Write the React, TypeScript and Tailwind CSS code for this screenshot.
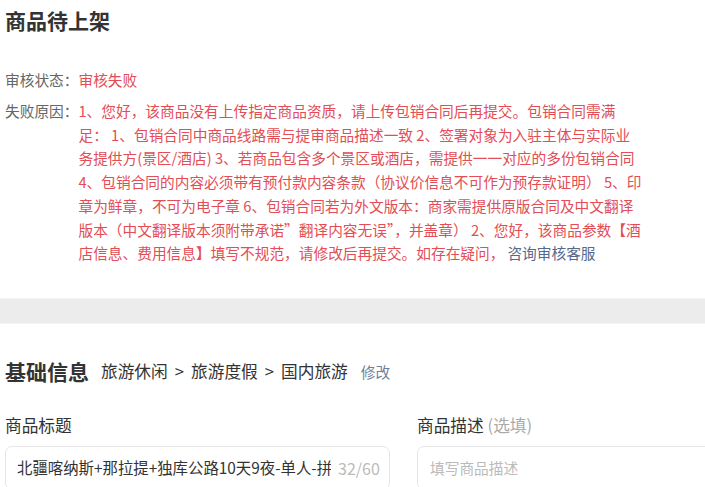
import React from "react";

const lines: string[] = [
  "1、您好，该商品没有上传指定商品资质，请上传包销合同后再提交。包销合同需满",
  "足： 1、包销合同中商品线路需与提审商品描述一致 2、签署对象为入驻主体与实际业",
  "务提供方(景区/酒店) 3、若商品包含多个景区或酒店，需提供一一对应的多份包销合同",
  "4、包销合同的内容必须带有预付款内容条款（协议价信息不可作为预存款证明） 5、印",
  "章为鲜章，不可为电子章 6、包销合同若为外文版本：商家需提供原版合同及中文翻译",
  "版本（中文翻译版本须附带承诺”翻译内容无误”，并盖章） 2、您好，该商品参数【酒",
];

export default function App() {
  return (
    <div className="w-[705px] h-[487px] overflow-hidden bg-white font-['Noto_Sans_CJK_SC',sans-serif] text-[#333]">
      <div className="px-[5px]">
        <h1 className="mt-[6px] text-[21px] leading-[28px] font-bold text-[#333]">商品待上架</h1>
        <div className="mt-[34px] flex text-[14.7px] leading-[24px]">
          <span className="shrink-0 text-[#666]">审核状态：</span>
          <span className="text-[#e34d55]">审核失败</span>
        </div>
        <div className="mt-[7px] flex text-[14.7px] leading-[23.7px]">
          <span className="shrink-0 text-[#666]">失败原因：</span>
          <div className="text-[#e34d55] whitespace-nowrap">
            {lines.map((l, i) => (
              <div key={i}>{l}</div>
            ))}
            <div>
              店信息、费用信息】填写不规范，请修改后再提交。如存在疑问，
              <span className="ml-[3px] text-[#56688c]">咨询审核客服</span>
            </div>
          </div>
        </div>
      </div>

      <div className="mt-[33px] h-[26px] bg-[#ececec] border-y border-[#f3f3f3]" />

      <div className="px-[5px]">
        <div className="mt-[34px] flex items-center h-[28px] whitespace-nowrap">
          <span className="text-[21px] font-bold text-[#333]">基础信息</span>
          <span className="ml-[12px] flex items-center text-[16.7px] text-[#333]">
            <span>旅游休闲</span>
            <span className="mx-[7px]">&gt;</span>
            <span>旅游度假</span>
            <span className="mx-[7px]">&gt;</span>
            <span>国内旅游</span>
          </span>
          <span className="ml-[13px] text-[14.7px] text-[#6f7fa0]">修改</span>
        </div>

        <div className="mt-[27px] flex gap-[27px]">
          <div className="w-[385px] shrink-0">
            <div className="text-[16.7px] leading-[24px] text-[#333]">商品标题</div>
            <div className="mt-[9px] h-[44px] flex items-center rounded-[7px] border border-[#e6e6e6] pl-[11px] pr-[11px]">
              <div className="w-[314px] shrink-0 overflow-hidden whitespace-nowrap text-[15.4px] text-[#333]">
                北疆喀纳斯+那拉提+独库公路10天9夜-单人-拼车
              </div>
              <span className="ml-[7px] shrink-0 text-[16px] text-[#bbb]">32/60</span>
            </div>
          </div>
          <div className="w-[385px] shrink-0">
            <div className="text-[16.7px] leading-[24px] text-[#333] whitespace-nowrap">
              商品描述 <span className="text-[#aaa]">(选填)</span>
            </div>
            <div className="mt-[9px] h-[44px] flex items-center rounded-[7px] border border-[#e6e6e6] pl-[12px]">
              <span className="text-[14.7px] text-[#bbb]">填写商品描述</span>
            </div>
          </div>
        </div>
      </div>
    </div>
  );
}
